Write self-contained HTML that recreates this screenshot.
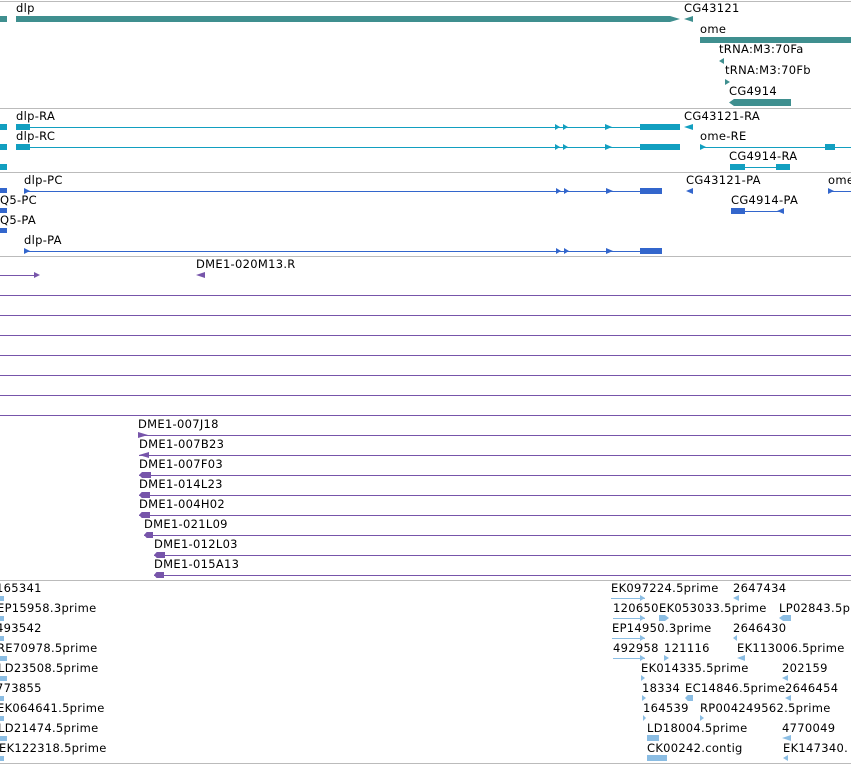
<!DOCTYPE html>
<html><head><meta charset="utf-8"><style>
body{margin:0;width:851px;height:764px;background:#fff;position:relative;overflow:hidden;font-family:"DejaVu Sans","Liberation Sans",sans-serif;font-size:11.5px;}
.t{position:absolute;white-space:nowrap;color:#000;line-height:13px;letter-spacing:0.3px}
.s{position:absolute;left:0;width:851px;height:1px;background:#bbb}
.b{position:absolute}
.te{background:#3f8f8f}.cy{background:#129fc0}.bl{background:#3366cc}.pu{background:#7755aa}.lb{background:#8bbde3}
.l{clip-path:polygon(0 50%,100% 0,100% 100%)}
.r{clip-path:polygon(0 0,100% 50%,0 100%)}
</style></head><body>
<div class="s" style="top:1px"></div><div class="s" style="top:108px"></div><div class="s" style="top:172px"></div><div class="s" style="top:256px"></div><div class="s" style="top:580px"></div><div class="s" style="top:763px"></div>

<!-- track 1 -->
<div class="t" style="left:16px;top:2px">dlp</div>
<div class="b te" style="left:0;top:16px;width:7px;height:6px"></div>
<div class="b te" style="left:16px;top:16px;width:664px;height:6px;clip-path:polygon(0 0,98.5% 0,100% 50%,98.5% 100%,0 100%)"></div>
<div class="t" style="left:684px;top:2px">CG43121</div>
<div class="b te l" style="left:684px;top:16px;width:9px;height:6px"></div>
<div class="t" style="left:700px;top:23px">ome</div>
<div class="b te" style="left:700px;top:37px;width:151px;height:6px"></div>
<div class="t" style="left:719px;top:43px">tRNA:M3:70Fa</div>
<div class="b te l" style="left:719px;top:58px;width:5px;height:6px"></div>
<div class="t" style="left:725px;top:64px">tRNA:M3:70Fb</div>
<div class="b te r" style="left:725px;top:79px;width:5px;height:6px"></div>
<div class="t" style="left:729px;top:85px">CG4914</div>
<div class="b te" style="left:729px;top:99px;width:62px;height:7px;clip-path:polygon(0 50%,8% 0,100% 0,100% 100%,8% 100%)"></div>

<!-- track 2 -->
<div class="t" style="left:16px;top:110px">dlp-RA</div>
<div class="t" style="left:16px;top:130px">dlp-RC</div>
<div class="b cy" style="left:0;top:124px;width:7px;height:6px"></div>
<div class="b cy" style="left:0;top:144px;width:7px;height:6px"></div>
<div class="b cy" style="left:0;top:164px;width:7px;height:6px"></div>
<div class="b cy" style="left:16px;top:127px;width:664px;height:1px"></div>
<div class="b cy" style="left:16px;top:147px;width:664px;height:1px"></div>
<div class="b cy" style="left:16px;top:124px;width:14px;height:6px"></div>
<div class="b cy" style="left:16px;top:144px;width:14px;height:6px"></div>
<div class="b cy r" style="left:555px;top:124px;width:5px;height:6px"></div><div class="b cy r" style="left:563px;top:124px;width:5px;height:6px"></div>
<div class="b cy r" style="left:605px;top:124px;width:7px;height:6px"></div>
<div class="b cy" style="left:640px;top:124px;width:40px;height:6px"></div>
<div class="b cy r" style="left:555px;top:144px;width:5px;height:6px"></div><div class="b cy r" style="left:563px;top:144px;width:5px;height:6px"></div>
<div class="b cy r" style="left:605px;top:144px;width:7px;height:6px"></div>
<div class="b cy" style="left:640px;top:144px;width:40px;height:6px"></div>
<div class="t" style="left:684px;top:110px">CG43121-RA</div>
<div class="b cy l" style="left:684px;top:124px;width:9px;height:6px"></div>
<div class="t" style="left:700px;top:130px">ome-RE</div>
<div class="b cy" style="left:700px;top:147px;width:151px;height:1px"></div>
<div class="b cy r" style="left:700px;top:144px;width:6px;height:6px"></div>
<div class="b cy" style="left:825px;top:144px;width:10px;height:6px"></div>
<div class="t" style="left:729px;top:150px">CG4914-RA</div>
<div class="b cy" style="left:730px;top:167px;width:60px;height:1px"></div>
<div class="b cy" style="left:730px;top:164px;width:15px;height:6px"></div>
<div class="b cy" style="left:776px;top:164px;width:14px;height:6px"></div>

<!-- track 3 -->
<div class="t" style="left:24px;top:174px">dlp-PC</div>
<div class="t" style="left:0;top:194px">Q5-PC</div>
<div class="t" style="left:0;top:214px">Q5-PA</div>
<div class="t" style="left:24px;top:234px">dlp-PA</div>
<div class="b bl" style="left:0;top:188px;width:7px;height:5px"></div>
<div class="b bl" style="left:0;top:208px;width:7px;height:5px"></div>
<div class="b bl" style="left:0;top:228px;width:7px;height:5px"></div>
<div class="b bl" style="left:24px;top:191px;width:638px;height:1px"></div>
<div class="b bl" style="left:24px;top:251px;width:638px;height:1px"></div>
<div class="b bl r" style="left:24px;top:188px;width:6px;height:6px"></div>
<div class="b bl r" style="left:24px;top:248px;width:6px;height:6px"></div>
<div class="b bl r" style="left:556px;top:188px;width:5px;height:6px"></div><div class="b bl r" style="left:564px;top:188px;width:5px;height:6px"></div>
<div class="b bl r" style="left:606px;top:188px;width:7px;height:6px"></div>
<div class="b bl" style="left:640px;top:188px;width:22px;height:6px"></div>
<div class="b bl r" style="left:556px;top:248px;width:5px;height:6px"></div><div class="b bl r" style="left:564px;top:248px;width:5px;height:6px"></div>
<div class="b bl r" style="left:606px;top:248px;width:7px;height:6px"></div>
<div class="b bl" style="left:640px;top:248px;width:22px;height:6px"></div>
<div class="t" style="left:686px;top:174px">CG43121-PA</div>
<div class="b bl l" style="left:686px;top:188px;width:7px;height:6px"></div>
<div class="t" style="left:828px;top:174px">ome</div>
<div class="b bl" style="left:828px;top:191px;width:23px;height:1px"></div>
<div class="b bl r" style="left:828px;top:188px;width:6px;height:6px"></div>
<div class="t" style="left:731px;top:194px">CG4914-PA</div>
<div class="b bl" style="left:731px;top:211px;width:53px;height:1px"></div>
<div class="b bl" style="left:731px;top:208px;width:14px;height:6px"></div>
<div class="b bl l" style="left:777px;top:208px;width:7px;height:6px"></div>

<!-- track 4 -->
<div class="b pu" style="left:0;top:275px;width:38px;height:1px"></div>
<div class="b pu r" style="left:34px;top:272px;width:6px;height:6px"></div>
<div class="t" style="left:196px;top:258px">DME1-020M13.R</div>
<div class="b pu l" style="left:196px;top:272px;width:9px;height:6px"></div>
<div class="b pu" style="left:0;top:295px;width:851px;height:1px"></div>
<div class="b pu" style="left:0;top:315px;width:851px;height:1px"></div>
<div class="b pu" style="left:0;top:335px;width:851px;height:1px"></div>
<div class="b pu" style="left:0;top:355px;width:851px;height:1px"></div>
<div class="b pu" style="left:0;top:375px;width:851px;height:1px"></div>
<div class="b pu" style="left:0;top:395px;width:851px;height:1px"></div>
<div class="b pu" style="left:0;top:415px;width:851px;height:1px"></div>
<div class="t" style="left:138px;top:418px">DME1-007J18</div>
<div class="b pu" style="left:138px;top:435px;width:713px;height:1px"></div><div class="b pu r" style="left:138px;top:432px;width:10px;height:6px"></div>
<div class="t" style="left:139px;top:438px">DME1-007B23</div>
<div class="b pu" style="left:139px;top:455px;width:712px;height:1px"></div><div class="b pu l" style="left:139px;top:452px;width:10px;height:6px"></div>
<div class="t" style="left:139px;top:458px">DME1-007F03</div>
<div class="b pu" style="left:139px;top:475px;width:712px;height:1px"></div><div class="b pu" style="left:139px;top:472px;width:12px;height:6px;clip-path:polygon(0 50%,25% 0,100% 0,100% 100%,25% 100%)"></div>
<div class="t" style="left:139px;top:478px">DME1-014L23</div>
<div class="b pu" style="left:139px;top:495px;width:712px;height:1px"></div><div class="b pu" style="left:139px;top:492px;width:11px;height:6px;clip-path:polygon(0 50%,25% 0,100% 0,100% 100%,25% 100%)"></div>
<div class="t" style="left:139px;top:498px">DME1-004H02</div>
<div class="b pu" style="left:139px;top:515px;width:712px;height:1px"></div><div class="b pu" style="left:139px;top:512px;width:11px;height:6px;clip-path:polygon(0 50%,25% 0,100% 0,100% 100%,25% 100%)"></div>
<div class="t" style="left:144px;top:518px">DME1-021L09</div>
<div class="b pu" style="left:144px;top:535px;width:707px;height:1px"></div><div class="b pu" style="left:144px;top:532px;width:9px;height:6px;clip-path:polygon(0 50%,30% 0,100% 0,100% 100%,30% 100%)"></div>
<div class="t" style="left:154px;top:538px">DME1-012L03</div>
<div class="b pu" style="left:154px;top:555px;width:697px;height:1px"></div><div class="b pu" style="left:154px;top:552px;width:11px;height:6px;clip-path:polygon(0 50%,25% 0,100% 0,100% 100%,25% 100%)"></div>
<div class="t" style="left:154px;top:558px">DME1-015A13</div>
<div class="b pu" style="left:154px;top:575px;width:697px;height:1px"></div><div class="b pu" style="left:154px;top:572px;width:10px;height:6px;clip-path:polygon(0 50%,25% 0,100% 0,100% 100%,25% 100%)"></div>

<!-- track 5 -->
<div class="t" style="left:-4px;top:582px">165341</div>
<div class="t" style="left:-3px;top:602px">EP15958.3prime</div>
<div class="t" style="left:-4px;top:622px">493542</div>
<div class="t" style="left:-3px;top:642px">RE70978.5prime</div>
<div class="t" style="left:-2px;top:662px">LD23508.5prime</div>
<div class="t" style="left:-4px;top:682px">773855</div>
<div class="t" style="left:-3px;top:702px">EK064641.5prime</div>
<div class="t" style="left:-2px;top:722px">LD21474.5prime</div>
<div class="t" style="left:-1px;top:742px">EK122318.5prime</div>
<div class="b lb" style="left:0;top:596px;width:4px;height:5px"></div>
<div class="b lb" style="left:0;top:616px;width:4px;height:5px"></div>
<div class="b lb" style="left:0;top:636px;width:4px;height:5px"></div>
<div class="b lb" style="left:0;top:656px;width:7px;height:5px"></div>
<div class="b lb" style="left:0;top:676px;width:7px;height:5px"></div>
<div class="b lb" style="left:0;top:696px;width:4px;height:5px"></div>
<div class="b lb" style="left:0;top:716px;width:4px;height:5px"></div>
<div class="b lb" style="left:0;top:736px;width:7px;height:5px"></div>
<div class="b lb" style="left:0;top:756px;width:4px;height:5px"></div>

<div class="t" style="left:611px;top:582px">EK097224.5prime</div>
<div class="t" style="left:733px;top:582px">2647434</div>
<div class="t" style="left:613px;top:602px">120650</div>
<div class="t" style="left:659px;top:602px">EK053033.5prime</div>
<div class="t" style="left:779px;top:602px">LP02843.5p</div>
<div class="t" style="left:612px;top:622px">EP14950.3prime</div>
<div class="t" style="left:733px;top:622px">2646430</div>
<div class="t" style="left:613px;top:642px">492958</div>
<div class="t" style="left:664px;top:642px">121116</div>
<div class="t" style="left:737px;top:642px">EK113006.5prime</div>
<div class="t" style="left:641px;top:662px">EK014335.5prime</div>
<div class="t" style="left:782px;top:662px">202159</div>
<div class="t" style="left:642px;top:682px">18334</div>
<div class="t" style="left:685px;top:682px">EC14846.5prime</div>
<div class="t" style="left:785px;top:682px">2646454</div>
<div class="t" style="left:643px;top:702px">164539</div>
<div class="t" style="left:700px;top:702px">RP004249562.5prime</div>
<div class="t" style="left:647px;top:722px">LD18004.5prime</div>
<div class="t" style="left:782px;top:722px">4770049</div>
<div class="t" style="left:647px;top:742px">CK00242.contig</div>
<div class="t" style="left:783px;top:742px">EK147340.</div>

<div class="b lb" style="left:611px;top:598px;width:34px;height:1px"></div><div class="b lb r" style="left:640px;top:595px;width:5px;height:6px"></div>
<div class="b lb l" style="left:733px;top:595px;width:6px;height:6px"></div>
<div class="b lb" style="left:613px;top:618px;width:32px;height:1px"></div><div class="b lb r" style="left:640px;top:615px;width:5px;height:6px"></div>
<div class="b lb" style="left:659px;top:615px;width:10px;height:6px;clip-path:polygon(0 0,60% 0,100% 50%,60% 100%,0 100%)"></div>
<div class="b lb" style="left:779px;top:615px;width:12px;height:6px;clip-path:polygon(0 50%,35% 0,100% 0,100% 100%,35% 100%)"></div>
<div class="b lb" style="left:612px;top:638px;width:33px;height:1px"></div><div class="b lb r" style="left:640px;top:635px;width:5px;height:6px"></div>
<div class="b lb l" style="left:733px;top:635px;width:4px;height:6px"></div>
<div class="b lb" style="left:613px;top:658px;width:32px;height:1px"></div><div class="b lb r" style="left:640px;top:655px;width:5px;height:6px"></div>
<div class="b lb r" style="left:664px;top:655px;width:5px;height:6px"></div>
<div class="b lb l" style="left:737px;top:655px;width:8px;height:6px"></div>
<div class="b lb r" style="left:641px;top:675px;width:4px;height:6px"></div>
<div class="b lb l" style="left:782px;top:675px;width:6px;height:6px"></div>
<div class="b lb r" style="left:642px;top:695px;width:4px;height:6px"></div>
<div class="b lb" style="left:685px;top:695px;width:8px;height:6px;clip-path:polygon(0 50%,35% 0,100% 0,100% 100%,35% 100%)"></div>
<div class="b lb l" style="left:785px;top:695px;width:6px;height:6px"></div>
<div class="b lb r" style="left:643px;top:715px;width:3px;height:6px"></div>
<div class="b lb r" style="left:700px;top:715px;width:4px;height:6px"></div>
<div class="b lb" style="left:647px;top:735px;width:12px;height:6px"></div>
<div class="b lb l" style="left:782px;top:735px;width:9px;height:6px"></div>
<div class="b lb" style="left:647px;top:755px;width:20px;height:6px"></div>
<div class="b lb l" style="left:783px;top:755px;width:5px;height:6px"></div>
</body></html>
